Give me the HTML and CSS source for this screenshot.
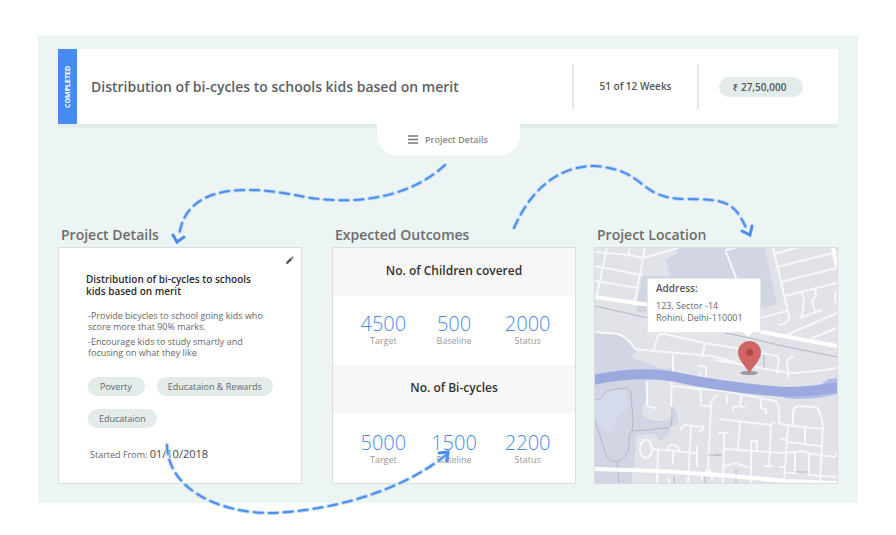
FILE: index.html
```html
<!DOCTYPE html>
<html lang="en">
<head>
<meta charset="utf-8">
<meta name="viewport" content="width=device-width, initial-scale=1">
<title>Project overview</title>
<link rel="stylesheet" href="styles.css">
</head>
<body>
<main class="panel">
  <header class="summary">
    <span class="status">COMPLETED</span>
    <h1 class="summary-title">Distribution of bi-cycles to schools kids based on merit</h1>
    <div class="weeks">51 of 12 Weeks</div>
    <div class="budget"><span class="budget-pill">₹ 27,50,000</span></div>
  </header>
  <button class="tab" type="button">
    <svg class="menu-icon" viewBox="0 0 10 9" aria-hidden="true"><path d="M0 1h10M0 4.5h10M0 8h10"/></svg>
    Project Details
  </button>

  <div class="columns">
    <section class="column">
      <h2 class="column-title">Project Details</h2>
      <div class="card details">
        <button class="edit" type="button" aria-label="Edit">
          <svg viewBox="0 0 10 10" aria-hidden="true"><path d="M1 9l.6-2.6L6.200 2 8 3.800 3.600 8.400zM6.800 1.400l.8-.7q.5-.3 1 .1l.6.6q.4.5.1 1l-.7.700z"/></svg>
        </button>
        <h3 class="details-title">Distribution of bi-cycles to schools<br>kids based on merit</h3>
        <p class="details-text">-Provide bicycles to school going kids who<br>score more that 90% marks.</p>
        <p class="details-text">-Encourage kids to study smartly and<br>focusing on what they like</p>
        <ul class="tags">
          <li class="tag tag-wide">Poverty</li>
          <li class="tag">Educataion &amp; Rewards</li>
          <li class="tag">Educataion</li>
        </ul>
        <p class="started">Started From: <time class="date" datetime="2018-10-01">01/10/2018</time></p>
      </div>
    </section>

    <section class="column">
      <h2 class="column-title">Expected Outcomes</h2>
      <div class="card">
        <h3 class="outcome-title">No. of Children covered</h3>
        <dl class="figures">
          <div class="figure"><dt>Target</dt><dd>4500</dd></div>
          <div class="figure"><dt>Baseline</dt><dd>500</dd></div>
          <div class="figure"><dt>Status</dt><dd>2000</dd></div>
        </dl>
        <h3 class="outcome-title">No. of Bi-cycles</h3>
        <dl class="figures">
          <div class="figure"><dt>Target</dt><dd>5000</dd></div>
          <div class="figure"><dt>Baseline</dt><dd>1500</dd></div>
          <div class="figure"><dt>Status</dt><dd>2200</dd></div>
        </dl>
      </div>
    </section>

    <section class="column">
      <h2 class="column-title">Project Location</h2>
      <div class="card map">
        <svg class="map-art" viewBox="595 248 242 235" preserveAspectRatio="xMidYMid slice" aria-hidden="true">
          <rect class="land" x="595" y="248" width="242" height="235"/>
          <g class="park">
            <path d="M673 248H765L777 304 750 311 720 312H636L642 276 670 276 666 259 678 253z"/>
            <path d="M595 333L620 335 631 343 636 352Q627 359 638 360L650 364Q668 372 673 366V390H595z"/>
            <path d="M595 380L673 375V406L677 412 678 424 671 427 668 434 661 442 655 434 636 435 634 470 632 475V483H595z"/>
          </g>
          <path class="land" d="M645 380H673V415Q668 422 656 421Q640 418 642 410Q642 405 647 402z"/>
          <path class="lake" d="M595 399L608 390 626 390 628 405 618 416 612 431 604 431 595 419z"/>
          <g class="road">
            <path d="M607 248L597 295M645 248L635 300M630 248L628 256M595 252L629 255 643 258 678 248M595 266L642 275M595 281L638 288M726 252L737 280M726 250L735 248"/>
            <path d="M773 248L789 316Q790 323 779 325M774 254L800 247M777 267L837 252M781 282L837 268M785 296L837 283M760 318L787 311M784 336L837 313M812 338L837 328M837 290Q833 298 837 305"/>
            <path d="M802 293L804 300 802 317M815 289L816 295 812 301 815 311M800 318L821 310"/>
            <path d="M595 332L618 334Q626 336 635 349L655 351 712 356 735 362M653 351L658 336Q659 333 664 334L705 343 760 352M705 343L702 357M673 355V377M760 353L777 356Q780 358 778 367L777 373M789 377L787 363Q787 358 793 357M715 360L790 373Q805 373 837 368"/>
            <path d="M647 382V404Q647 407 656 408M672 373L671 406M672 386L700 389 718 390 750 396 775 401Q780 403 779 423L785 425 823 429M700 374L701 404Q701 407 710 406Q711 400 718 395M699 366L706 367 706 380"/>
            <path d="M711 407L708 470 705 474Q701 474 702 479M706 471Q712 467 712 479M727 396V403M741 397L740 406 733 407V410M740 406L745 408M761 400V408L766 409V413"/>
            <path d="M793 425V413Q793 406 800 406L816 407Q820 410 823 425L820 483M788 426L784 483M805 428V442M788 442L820 446M781 439L787 440"/>
            <path d="M720 419L770 425 775 422M771 426L769 465M764 466L773 466M740 422L738 449M719 433L728 433M724 434L723 483M725 449L784 453Q795 452 802 451Q808 453 812 454L835 457 837 453M795 453V472M809 454V475L837 477M785 473L797 473M780 467L785 467"/>
            <path d="M751 483L751 442Q751 440 757 441V450M725 466L736 463M738 464L748 467"/>
            <path d="M681 430Q683 424 687 425L703 427Q704 430 700 431M691 426L688 483M697 447L697 466M652 449L696 453M668 449Q669 444 675 445Q679 447 679 451M673 451V463M658 451L657 483M669 483V479"/>
            <ellipse cx="646" cy="449" rx="6" ry="9"/>
          </g>
          <g class="trail">
            <path d="M595 306L648 318M672 327L715 331 750 338 778 345 837 357M764 355V368M715 455H722M795 472H807M736 469V483M674 477V483M705 477V483M708 455H720"/>
            <path d="M595 400Q600 400 606 392Q611 389 626 388Q631 389 631 396L633 420 632 431Q628 433 629 448Q625 461 615 462Q607 460 605 452L595 420M632 431L648 430Q660 428 668 428Q672 426 672 420V407M617 462L619 483"/>
          </g>
          <path class="highway" d="M595 297L650 305 762 332 837 346M833 248L837 266M595 469L660 471 720 475 785 481 837 483"/>
          <path class="river-bank" d="M818 388L824 382 829 379 837 378V394Q810 401 785 398V388z"/>
          <path class="river" d="M593 380Q645 369 685 379C715 385 745 389 785 392Q810 392 839 387"/>
          <ellipse class="pin-shadow" cx="749" cy="373" rx="9" ry="2"/>
          <path class="pin" d="M749.500 373C746 367 738 360 738 352.500A11.500 11.500 0 0 1 761 352.500C761 360 753 367 749.500 373z"/>
          <circle class="pin-dot" cx="749.500" cy="352.500" r="3.500"/>
        </svg>
        <address class="callout"><strong>Address:</strong>123, Sector -14<br>Rohini, Delhi-110001</address>
      </div>
    </section>
  </div>
</main>

<svg class="arrows" viewBox="0 0 896 535" aria-hidden="true">
  <g class="halo">
    <path d="M445 165C405 202 345 205 300 196 255 187 185 180 179 237"/>
    <path d="M514 228C532 187 560 166 595 166 648 170 637 199 686 199 729 199 735 203 748 232"/>
    <path d="M167 445C168 490 220 513 271 513 330 511 400 492 446 455"/>
  </g>
  <g class="dash">
    <path d="M445 165C405 202 345 205 300 196 255 187 185 180 179 237"/>
    <path d="M514 228C532 187 560 166 595 166 648 170 637 199 686 199 729 199 735 203 748 232"/>
    <path d="M167 445C168 490 220 513 271 513 330 511 400 492 446 455"/>
  </g>
  <path class="head" d="M173 235L177 242 184 237M742 231L750 235 752 226M439 453L448 452 447 461"/>
</svg>
</body>
</html>
```
FILE: styles.css
```css
* { box-sizing: border-box; }

body {
  position: relative;
  margin: 0;
  padding: 35px 38px 32px;
  background: #fff;
  color: #666;
  font-family: "Open Sans", "Noto Sans", sans-serif;
  font-size: 9px;
  line-height: 11px;
}

h1, h2, h3, p, dl, dd, ul { margin: 0; padding: 0; }
button { border: 0; padding: 0; font: inherit; color: inherit; }

.panel {
  padding: 14px 20px 19px;
  background: #ecf5f4;
}

.summary {
  display: flex;
  align-items: center;
  height: 75px;
  background: #fff;
  box-shadow: 0 4px 0 #e2ecea;
}

.status {
  align-self: stretch;
  display: flex;
  align-items: center;
  justify-content: center;
  width: 19px;
  background: #478af0;
  color: #fff;
  font-weight: 700;
  font-size: 7px;
  writing-mode: vertical-rl;
  transform: rotate(180deg);
}

.summary-title {
  flex: 1;
  padding-left: 14px;
  font-size: 14px;
  line-height: 20px;
  font-weight: 600;
  color: #5c6165;
}

.weeks, .budget {
  display: flex;
  align-items: center;
  justify-content: center;
  height: 45px;
  border-left: 2px solid #e5e8e8;
  font-size: 10px;
  font-weight: 600;
  color: #555;
}
.weeks { width: 125px; }
.budget { width: 141px; padding-right: 15px; }

.budget-pill {
  padding: 0 17px 0 14px;
  border-radius: 10px;
  background: #e3eceb;
  line-height: 20px;
}

.tab {
  position: relative;
  display: flex;
  align-items: center;
  justify-content: center;
  gap: 7px;
  width: 143px;
  height: 31px;
  margin: 0 auto;
  border-radius: 0 0 20px 20px;
  background: #fff;
  color: #888;
  font-weight: 600;
}
.menu-icon { width: 10px; height: 9px; stroke: #777; stroke-width: 1.5; }

.columns { display: flex; margin-top: 70px; }
.column { flex: 1; min-width: 0; display: flex; flex-direction: column; }
.column + .column { margin-left: 30px; }
.column + .column + .column { margin-left: 18px; }

.column-title {
  padding: 0 3px 2px;
  font-size: 14px;
  line-height: 20px;
  font-weight: 600;
  color: #6c6c6c;
}

.card {
  position: relative;
  flex: 1;
  min-height: 237px;
  border: 1px solid #d9dddd;
  background: #fff;
}

.details { padding: 25px 20px 10px 29px; }
.edit {
  position: absolute;
  top: 8px;
  right: 7px;
  width: 9px;
  height: 9px;
  background: none;
}
.edit svg { display: block; fill: #555; }

.details-title {
  margin: 0 0 13px -2px;
  font-size: 10px;
  line-height: 12px;
  font-weight: 600;
  color: #2b2b2b;
}
.details-text { margin-bottom: 4px; }

.tags {
  display: flex;
  flex-wrap: wrap;
  gap: 13px 12px;
  margin-top: 19px;
  list-style: none;
}
.tag {
  padding: 0 11px;
  border-radius: 10px;
  background: #e3eceb;
  line-height: 19px;
}
.tag-wide { padding: 0 13px 0 12px; }

.started { margin: 19px 0 0 2px; line-height: 14px; }
.date { font-size: 11px; color: #444; }

.outcome-title {
  height: 48px;
  background: #f7f7f7;
  text-align: center;
  font-size: 12px;
  line-height: 46px;
  font-weight: 600;
  color: #333;
}

.figures {
  display: grid;
  grid-template-columns: 12fr 12fr 13fr;
  height: 69px;
  padding: 16px 9px 0 15px;
  text-align: center;
}
.figures:last-child { padding-top: 18px; }
.figure { display: flex; flex-direction: column-reverse; justify-content: flex-end; }
.figure dd {
  color: #478af0;
  font-size: 20px;
  line-height: 24px;
  font-weight: 300;
}
.figure dt { color: #999; line-height: 10px; }

.map-art { display: block; width: 100%; height: 235px; fill: none; }
.land { fill: #e2e3e9; }
.park { fill: #d2d6e4; }
.lake { fill: #d5dbed; }
.road { stroke: #f7f8fb; stroke-width: 2; stroke-linecap: round; stroke-linejoin: round; }
.trail { stroke: #b3b7c3; stroke-width: 1; }
.highway { stroke: #fff; stroke-width: 4; }
.river { stroke: #9ba9df; stroke-width: 10; }
.river-bank { fill: #b3bee8; }
.pin { fill: #d16465; }
.pin-dot { fill: #ae4747; }
.pin-shadow { fill: #9a9a9f; }

.callout {
  position: absolute;
  top: 30px;
  left: 52px;
  width: 114px;
  padding: 3px 8px 8px;
  border: 1px solid #e6e7ea;
  background: #fff;
  font-style: normal;
  line-height: 12px;
}
.callout strong {
  display: block;
  margin-bottom: 6px;
  font-size: 10px;
  font-weight: 600;
  color: #555;
}
.callout::after {
  content: "";
  position: absolute;
  top: 100%;
  right: 7px;
  border: 5px solid transparent;
  border-top-color: #fff;
  border-bottom: 0;
}

.arrows {
  position: absolute;
  top: 0;
  left: 0;
  width: 100%;
  pointer-events: none;
  fill: none;
  stroke-linecap: round;
}
.halo { stroke: #bcd5f7; stroke-width: 4; stroke-dasharray: 9 6; }
.dash { stroke: #4a8df0; stroke-width: 2; stroke-dasharray: 9 6; }
.head { stroke: #4a8df0; stroke-width: 3; }
```
